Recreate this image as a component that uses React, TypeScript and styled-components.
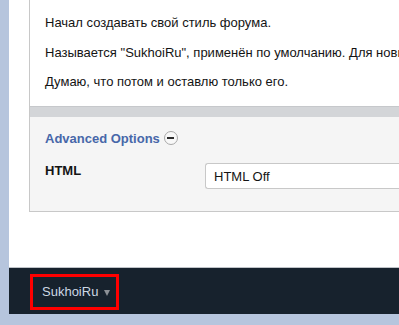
import styled, { createGlobalStyle } from 'styled-components';

const GlobalStyle = createGlobalStyle`
  html, body {
    margin: 0;
    padding: 0;
    background: #b6c5dd;
    font-family: "Liberation Sans", Arial, sans-serif;
    overflow: hidden;
  }
`;

const Shell = styled.div`
  width: 399px;
  height: 325px;
  padding-left: 9px;
  box-sizing: border-box;
`;

const Page = styled.div`
  background: #ffffff;
  width: 420px;
`;

const Content = styled.div`
  padding: 0 0 55px 20px;
`;

const Panel = styled.div`
  border-left: 1px solid #c8c8c8;
  border-bottom: 1px solid #c8c8c8;
`;

const Message = styled.div`
  padding: 14px 0 16px 15px;
  background: #ffffff;
`;

const Paragraph = styled.p`
  margin: 0 0 12.5px;
  font-size: 13px;
  line-height: 17px;
  color: #141414;
  white-space: nowrap;

  &:last-child {
    margin-bottom: 0;
  }
`;

const Divider = styled.div`
  height: 10px;
  background: #d3d5d8;
  border-top: 1px solid #c6c8cb;
`;

const Options = styled.div`
  background: #f5f5f5;
  padding: 12px 0 22px 15px;
`;

const OptionsTitle = styled.div`
  display: flex;
  align-items: center;
  gap: 4px;
  font-size: 13px;
  font-weight: 700;
  color: #4767a9;
  height: 18px;
`;

const ToggleIcon = styled.span`
  width: 12px;
  height: 12px;
  border: 1px solid #a8a8a8;
  border-radius: 50%;
  background: #f8f8f8;
  display: flex;
  align-items: center;
  justify-content: center;

  &::before {
    content: '';
    width: 7px;
    height: 2px;
    background: #2c2c2c;
  }
`;

const FieldRow = styled.div`
  display: flex;
  align-items: flex-start;
  margin-top: 16px;
`;

const FieldLabel = styled.div`
  width: 160px;
  font-size: 13px;
  font-weight: 700;
  color: #141414;
  line-height: 16px;
`;

const SelectBox = styled.div`
  flex: 1;
  height: 24px;
  margin-top: 0;
  border: 1px solid #c8c8c8;
  border-right: none;
  border-radius: 3px 0 0 3px;
  background: #ffffff;
  font-size: 13px;
  color: #141414;
  display: flex;
  align-items: center;
  padding-left: 8px;
`;

const Footer = styled.div`
  background: #17222d;
  border-top: 1px solid #bfc3c8;
  height: 46px;
  display: flex;
  align-items: center;
  padding-left: 21px;
`;

const StyleChooser = styled.div`
  border: 3px solid #ff0000;
  width: 74px;
  height: 30px;
  display: flex;
  align-items: center;
  gap: 6px;
  padding-left: 9px;
  box-sizing: content-box;
  margin-top: 1px;
`;

const StyleName = styled.span`
  font-size: 13px;
  color: #cdd8e4;
`;

const Caret = styled.span`
  width: 0;
  height: 0;
  border-left: 3.5px solid transparent;
  border-right: 3.5px solid transparent;
  border-top: 6px solid #8c9196;
  margin-top: 2px;
`;

export default function App() {
  return (
    <>
      <GlobalStyle />
      <Shell>
        <Page>
          <Content>
            <Panel>
              <Message>
                <Paragraph>Начал создавать свой стиль форума.</Paragraph>
                <Paragraph>
                  Называется "SukhoiRu", применён по умолчанию. Для новых
                </Paragraph>
                <Paragraph>Думаю, что потом и оставлю только его.</Paragraph>
              </Message>
              <Divider />
              <Options>
                <OptionsTitle>
                  Advanced Options
                  <ToggleIcon />
                </OptionsTitle>
                <FieldRow>
                  <FieldLabel>HTML</FieldLabel>
                  <SelectBox>HTML Off</SelectBox>
                </FieldRow>
              </Options>
            </Panel>
          </Content>
          <Footer>
            <StyleChooser>
              <StyleName>SukhoiRu</StyleName>
              <Caret />
            </StyleChooser>
          </Footer>
        </Page>
      </Shell>
    </>
  );
}
